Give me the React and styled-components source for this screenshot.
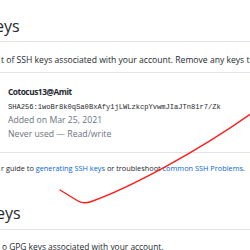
import React from "react";
import styled, { createGlobalStyle } from "styled-components";

const GlobalStyle = createGlobalStyle`
  html, body {
    margin: 0;
    padding: 0;
    background: #ffffff;
  }
  body {
    font-family: "Open Sans", "Noto Sans", sans-serif;
    color: #24292e;
  }
`;

const Page = styled.div`
  position: relative;
  width: 250px;
  height: 250px;
  overflow: hidden;
  white-space: nowrap;
`;

const Subhead = styled.div`
  padding-top: ${(p) => p.$top}px;
  padding-bottom: ${(p) => p.$bottom}px;
  border-bottom: 1px solid #e1e4e8;
`;

const Heading = styled.h2`
  margin: 0 0 0 ${(p) => p.$shift}px;
  font-size: 16px;
  font-weight: 400;
  line-height: 20px;
`;

const Text = styled.p`
  margin: ${(p) => p.$top}px 0 ${(p) => p.$bottom}px;
  padding-left: ${(p) => p.$indent || 0}px;
  font-size: ${(p) => p.$size}px;
  line-height: 14px;
  color: #24292e;
`;

const KeyBox = styled.div`
  border-top: 1px solid #e1e4e8;
  border-bottom: 1px solid #e1e4e8;
  padding: 12px 0 11px 8px;
`;

const KeyTitle = styled.div`
  font-size: 8.3px;
  font-weight: 700;
  letter-spacing: -0.45px;
  line-height: 14px;
  margin-bottom: 1px;
`;

const Fingerprint = styled.code`
  display: block;
  font-family: "Liberation Mono", "DejaVu Sans Mono", monospace;
  font-size: 7.1px;
  line-height: 14px;
`;

const KeyMeta = styled.div`
  font-size: 8.7px;
  line-height: ${(p) => p.$lh}px;
  color: #6a737d;
`;

const Link = styled.a`
  color: #0366d6;
  text-decoration: none;
`;

const Scribble = styled.svg`
  position: absolute;
  left: 0;
  top: 0;
  pointer-events: none;
`;

export default function App() {
  return (
    <Page>
      <GlobalStyle />
      <Subhead $top={16} $bottom={5}>
        <Heading $shift={-5}>eys</Heading>
      </Subhead>
      <Text $top={11} $bottom={5} $size={8.6} $indent={1}>
        t of SSH keys associated with your account. Remove any keys that you
        do not recognize.
      </Text>
      <KeyBox>
        <KeyTitle>Cotocus13@Amit</KeyTitle>
        <Fingerprint>SHA256:1woBr8k0qSa0BxAfy1jLWLzkcpYvwmJIaJTn81r7/Zk</Fingerprint>
        <KeyMeta $lh={13}>Added on Mar 25, 2021</KeyMeta>
        <KeyMeta $lh={14}>Never used — Read/write</KeyMeta>
      </KeyBox>
      <Text $top={8} $bottom={0} $size={7.35} $indent={1}>
        r guide to <Link href="#">generating SSH keys</Link> or troubleshoot{" "}
        <Link href="#">common SSH Problems</Link>.
      </Text>
      <Subhead $top={28} $bottom={6}>
        <Heading $shift={-4}>eys</Heading>
      </Subhead>
      <Text $top={10} $bottom={0} $size={8.4} $indent={2}>
        o GPG keys associated with your account.
      </Text>
      <Scribble width="250" height="250" viewBox="0 0 250 250">
        <path
          d="M60 190 L78 201 Q83 204 90 202 C130 188 200 150 252 113"
          fill="none"
          stroke="#ff1a1a"
          strokeWidth="1.4"
          strokeLinecap="round"
        />
      </Scribble>
    </Page>
  );
}
